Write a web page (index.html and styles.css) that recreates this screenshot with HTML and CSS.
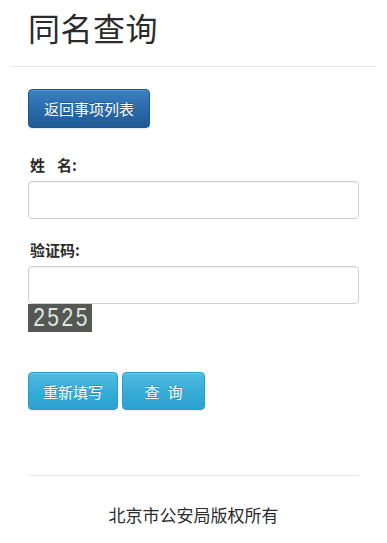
FILE: index.html
```html
<!DOCTYPE html>
<html lang="zh-CN">
<head>
<meta charset="utf-8">
<title>同名查询</title>
<link rel="stylesheet" href="styles.css">
</head>
<body>
<div class="page">
  <h1 class="title">同名查询</h1>
  <hr class="rule-top">
  <div class="content">
    <button class="btn btn-primary" type="button">返回事项列表</button>
    <label class="label label-first">姓<span class="sp"></span>名:</label>
    <input class="field" type="text">
    <label class="label">验证码:</label>
    <input class="field" type="text">
    <div class="captcha"><span class="digits">2525</span></div>
    <div class="actions">
      <button class="btn btn-info btn-reset" type="button">重新填写</button>
      <button class="btn btn-info btn-query" type="button">查<span class="sp2"></span>询</button>
    </div>
    <hr class="rule-bottom">
    <p class="footer">北京市公安局版权所有</p>
  </div>
</div>
</body>
</html>
```
FILE: styles.css
```css
html, body {
  margin: 0;
  padding: 0;
  background: #ffffff;
}
body {
  font-family: "Noto Sans CJK SC", "Noto Sans", sans-serif;
  color: #333333;
}
.page {
  width: 387px;
  height: 543px;
  padding: 0 11px;
  box-sizing: border-box;
  overflow: hidden;
}
.title {
  margin: 6px 0 0 17px;
  font-size: 32px;
  line-height: 42px;
  font-weight: 400;
  color: #2b2b2b;
  letter-spacing: 0.5px;
}
.rule-top {
  margin: 18px 0 0 0;
  border: 0;
  border-top: 1px solid #e8e8e8;
  height: 0;
}
.content {
  padding: 0 17px;
  display: flex;
  flex-direction: column;
  align-items: flex-start;
}
.btn {
  font-family: "Noto Sans CJK SC", "Noto Sans", sans-serif;
  font-size: 15px;
  color: #ffffff;
  border-radius: 4px;
  height: 39px;
  padding: 0 15px;
  cursor: pointer;
  text-shadow: 0 -1px 0 rgba(0, 0, 0, 0.2);
}
.btn-primary {
  margin-top: 22px;
  width: 122px;
  background: linear-gradient(to bottom, #3a80c0 0%, #2868a6 60%, #1f5b96 100%);
  border: 1px solid #1f5690;
  box-shadow: inset 0 1px 0 rgba(255, 255, 255, 0.15), 0 1px 1px rgba(0, 0, 0, 0.08);
}
.label {
  display: block;
  font-size: 15px;
  line-height: 20px;
  font-weight: 700;
  color: #2a2a2a;
  margin-top: 21px;
  margin-bottom: 6px;
  margin-left: 2px;
}
.label-first {
  margin-top: 27px;
  margin-bottom: 6px;
}
.sp {
  display: inline-block;
  width: 12px;
}
.field {
  display: block;
  width: 331px;
  height: 38px;
  box-sizing: border-box;
  border: 1px solid #cfcfcf;
  border-radius: 4px;
  box-shadow: inset 0 1px 1px rgba(0, 0, 0, 0.06);
  background: #ffffff;
  margin: 0;
}
.captcha {
  width: 64px;
  height: 28px;
  background: #555755;
  display: flex;
  align-items: center;
  justify-content: center;
}
.digits {
  display: inline-block;
  color: #dfe6dc;
  font-family: "Liberation Sans", Arial, sans-serif;
  font-size: 21px;
  line-height: 28px;
  letter-spacing: 2.5px;
  padding-left: 3px;
  transform: scaleY(1.2);
}
.actions {
  display: flex;
  gap: 4px;
  margin-top: 40px;
}
.btn-info {
  height: 38px;
  background: linear-gradient(to bottom, #4fbbe0 0%, #35abd6 55%, #2ba2cf 100%);
  border: 1px solid #2a9cc8;
  box-shadow: inset 0 1px 0 rgba(255, 255, 255, 0.2), 0 1px 1px rgba(0, 0, 0, 0.06);
}
.btn-reset {
  width: 90px;
  padding: 0;
}
.btn-query {
  width: 83px;
  padding: 0;
}
.sp2 {
  display: inline-block;
  width: 8px;
}
.rule-bottom {
  align-self: stretch;
  margin: 65px 0 0 0;
  border: 0;
  border-top: 1px solid #e8e8e8;
  height: 0;
}
.footer {
  align-self: stretch;
  text-align: center;
  margin: 27px 0 0 0;
  font-size: 17px;
  line-height: 24px;
  color: #2b2b2b;
}
```
